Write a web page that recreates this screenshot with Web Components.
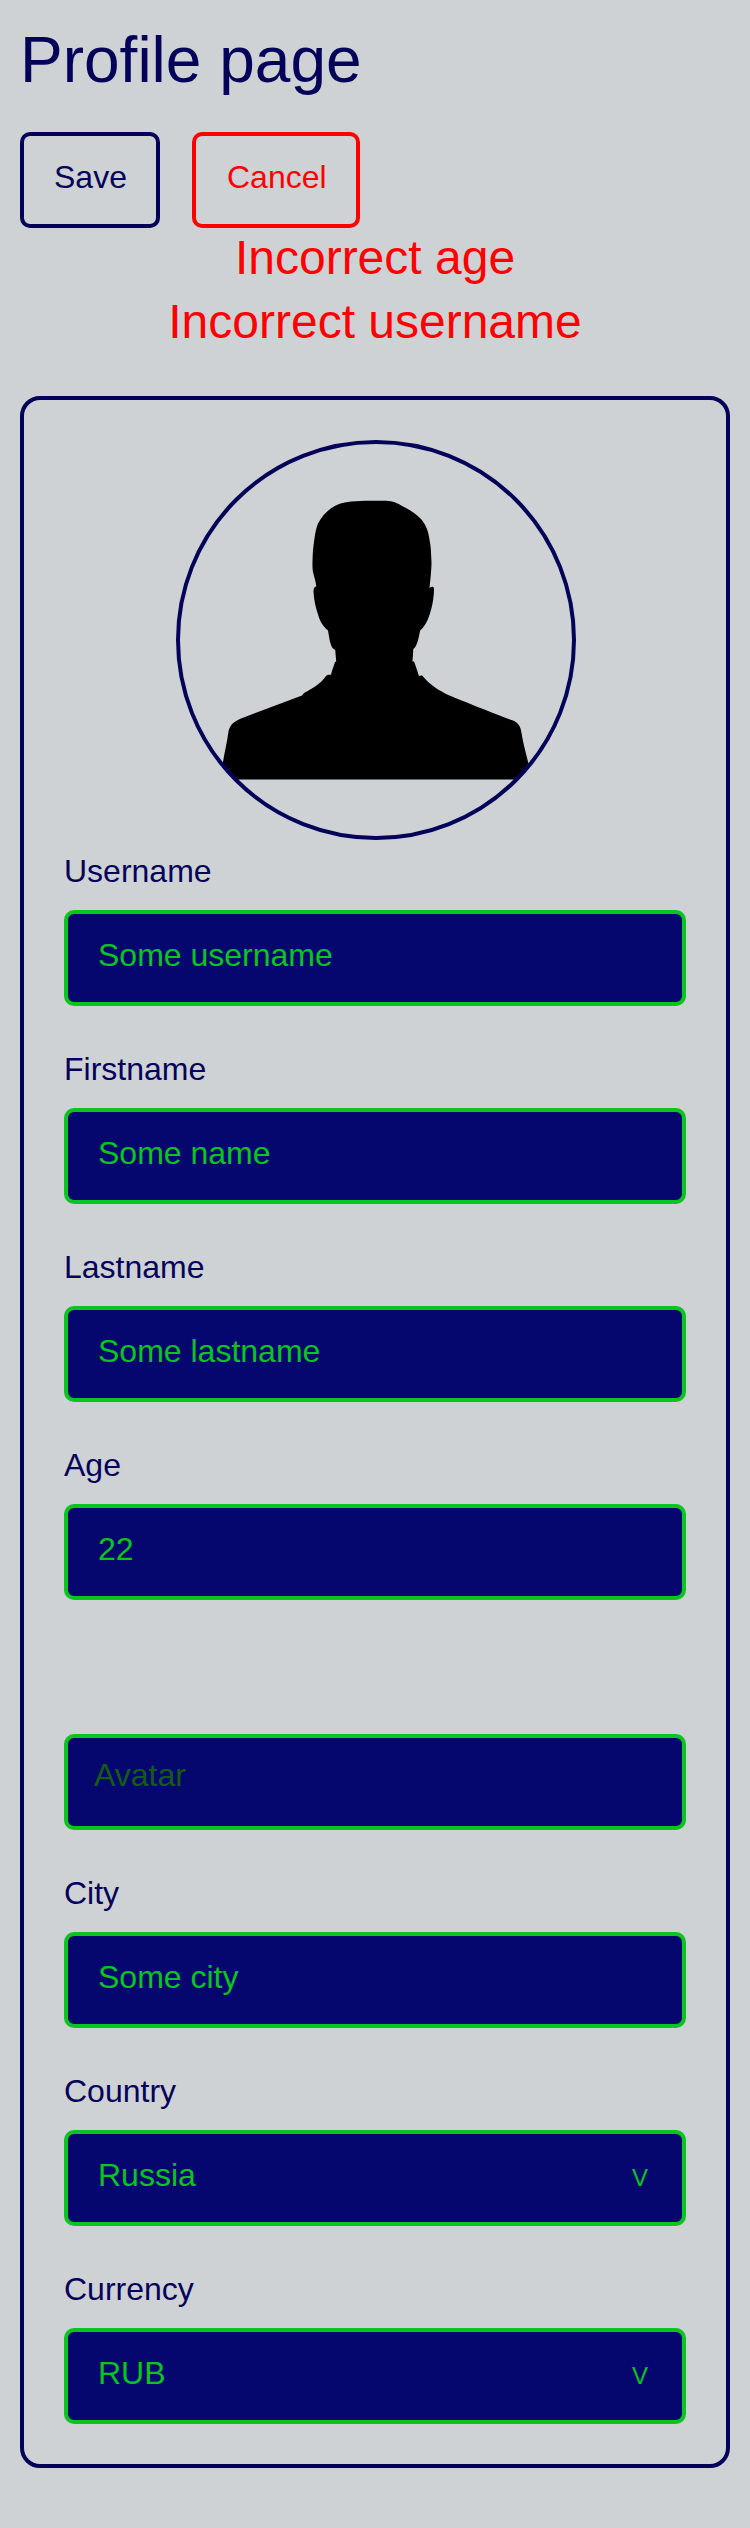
<!DOCTYPE html>
<html lang="en">
<head>
<meta charset="utf-8">
<title>Profile page</title>
<style>
  body { margin: 0; background: #ced2d5; font-family: "Liberation Sans", Arial, sans-serif; font-size: 32px; color: #040259; }
</style>
</head>
<body>
<profile-page></profile-page>

<script>
const define = (name, html) => {
  const template = document.createElement('template');
  template.innerHTML = html;
  customElements.define(name, class extends HTMLElement {
    constructor() {
      super();
      this.attachShadow({ mode: 'open' }).append(template.content.cloneNode(true));
    }
  });
};

define('app-button', `
  <style>
    :host { display: block; box-sizing: border-box; height: 96px; width: 140px; color: #040259; }
    :host([kind="cancel"]) { width: 168px; color: #ff0000; }
    button { display: flex; align-items: flex-start; box-sizing: border-box; width: 100%; height: 100%; margin: 0; padding: 25px 0 0 30px;
      text-align: left; white-space: nowrap; font: inherit; line-height: 32px; color: inherit; background: none; border: 4px solid currentColor; border-radius: 10px; }
    :host([kind="cancel"]) button { padding-left: 31px; }
  </style>
  <button type="button"><slot></slot></button>`);

define('form-error', `
  <style>:host { display: block; text-align: center; font-size: 48px; line-height: 64px; color: #ff0000; }</style>
  <slot></slot>`);

define('user-avatar', `
  <style>
    :host { display: block; width: 400px; height: 400px; }
    svg { display: block; }
  </style>
  <svg width="400" height="400" viewBox="176 440 400 400" role="img" aria-label="Avatar">
    <defs><clipPath id="disc"><circle cx="376" cy="640" r="196.5"/></clipPath></defs>
    <path clip-path="url(#disc)" d="M376 500.7C361 500.7 349 501 340.500 503.500C331 506.500 323 514 318 523.500C315 530 313.300 547 312.700 555C312.400 563 312.300 568 313 572C314 577 315.800 581 316.300 586.500C314.500 586.500 313.400 588 313.500 592C314 601 316 609 318.500 616C320.500 623 324 627 328 630.500C329 636 329.500 641 331 645C332 648 333.500 649 335.200 650L336.200 661.500L335 662C333.500 667 332 670 331 674.700C330 675 327.500 674 326 676C321 684 311 689 304 693L302 695.500L241 718.500C232 722 229 727 228.300 733C227 743 224.500 752 223 762L216 800V779.500H540L528.300 763C526 753 523.500 745 521.500 733C520.500 727 519 723 513 720.500C498 715 465 702 448.300 695C440 691 430 685 423 676.500C422 674.500 420 676 418.800 675.700C417 670 415.500 665 414 661.500H412.500L413.300 649C417.500 646 418.500 638 420.200 630.500C426 625 428.500 619 430.500 611.500C433 604 434 595 434 589C433.800 586 431.500 586.500 429.500 588C430.500 579 431.500 569 431.500 562C431 552 431 547 429.700 541C428.500 531 426 525 421 519C415 513 408 509 403 506.500C397 503 393 501 386 500.800C383 500.700 380 500.700 376 500.700Z"/>
    <circle cx="376" cy="640" r="198" fill="none" stroke="#040259" stroke-width="4"/>
  </svg>`);

define('text-field', `
  <style>
    :host { display: block; }
    .label { height: 57px; line-height: 36px; box-sizing: border-box; }
    .box { box-sizing: border-box; height: 96px; padding: 23px 34px 0 30px; display: flex; justify-content: space-between; align-items: baseline;
      line-height: 36px; border: 4px solid #0ac41f; border-radius: 10px; background: #05076e; color: #0ac41f; }
    :host([empty]) .box { padding: 19px 26px 0; color: #155c10; }
    .arrow { display: none; font-size: 24px; }
    :host([select]) .arrow { display: block; }
  </style>
  <div class="label"><slot name="label"></slot></div>
  <div class="box"><div><slot></slot></div><span class="arrow">V</span></div>`);

define('profile-card', `
  <style>
    :host { display: flex; flex-direction: column; box-sizing: border-box; height: 2072px; padding: 40px; border: 4px solid #040259; border-radius: 20px; }
    .avatar { display: flex; justify-content: center; padding-left: 2px; margin-bottom: 13px; }
    .fields { display: flex; flex-direction: column; gap: 45px; }
    ::slotted([empty]) { margin-top: 32px; }
  </style>
  <div class="avatar"><user-avatar></user-avatar></div>
  <div class="fields"><slot></slot></div>`);

define('profile-page', `
  <style>
    :host { display: block; box-sizing: border-box; height: 2528px; padding: 20px; }
    h1 { margin: 0; height: 112px; box-sizing: border-box; padding-top: 3px; font-size: 64px; font-weight: 400; line-height: 74px; }
    .actions { display: flex; gap: 32px; height: 94px; }
    .errors { height: 170px; }
  </style>
  <h1>Profile page</h1>
  <div class="actions"><app-button>Save</app-button><app-button kind="cancel">Cancel</app-button></div>
  <div class="errors"><form-error>Incorrect age</form-error><form-error>Incorrect username</form-error></div>
  <profile-card>
    <text-field><span slot="label">Username</span>Some username</text-field>
    <text-field><span slot="label">Firstname</span>Some name</text-field>
    <text-field><span slot="label">Lastname</span>Some lastname</text-field>
    <text-field><span slot="label">Age</span>22</text-field>
    <text-field empty>Avatar</text-field>
    <text-field><span slot="label">City</span>Some city</text-field>
    <text-field select><span slot="label">Country</span>Russia</text-field>
    <text-field select><span slot="label">Currency</span>RUB</text-field>
  </profile-card>`);
</script>
</body>
</html>
